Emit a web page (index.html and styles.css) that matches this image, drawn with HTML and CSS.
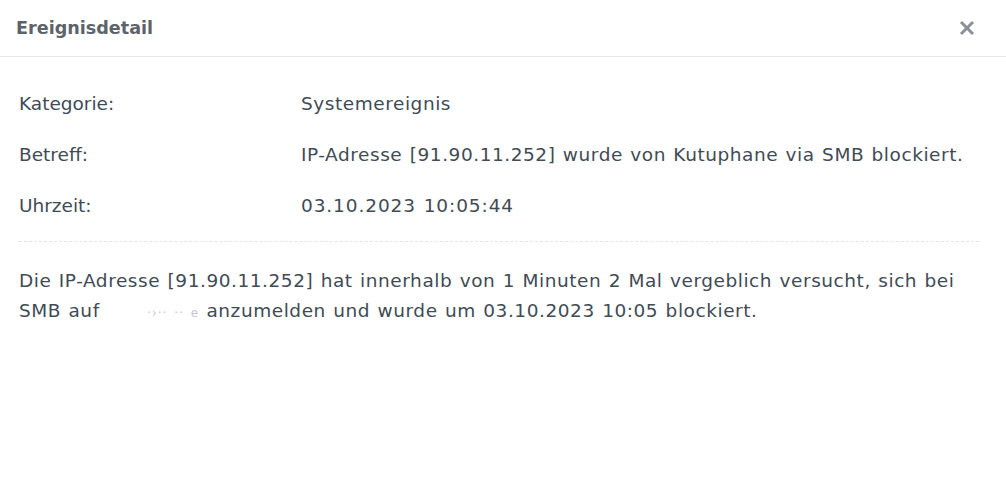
FILE: index.html
```html
<!DOCTYPE html>
<html lang="de">
<head>
<meta charset="utf-8">
<link rel="stylesheet" href="styles.css">
</head>
<body>
<div class="dialog">
  <header class="header">
    <h1 class="title">Ereignisdetail</h1>
    <button class="close" aria-label="Schließen">
      <svg width="16" height="16" viewBox="0 0 16 16"><path d="M2 2 L14 14 M14 2 L2 14" stroke="#8b9096" stroke-width="3" stroke-linecap="butt"/></svg>
    </button>
  </header>
  <main class="body">
    <div class="fields">
      <div class="row"><span class="label">Kategorie:</span><span class="value">Systemereignis</span></div>
      <div class="row"><span class="label">Betreff:</span><span class="value">IP-Adresse [91.90.11.252] wurde von Kutuphane via SMB blockiert.</span></div>
      <div class="row"><span class="label">Uhrzeit:</span><span class="value num">03.10.2023 10:05:44</span></div>
    </div>
    <p class="desc">Die IP-Adresse [91.90.11.252] hat innerhalb von 1 Minuten 2 Mal vergeblich versucht, sich bei SMB auf <span class="redacted">·›·· ·· e</span> anzumelden und wurde um 03.10.2023 10:05 blockiert.</p>
  </main>
</div>
</body>
</html>
```

FILE: styles.css
```css
html, body {
  margin: 0;
  padding: 0;
  background: #ffffff;
}
body {
  font-family: "DejaVu Sans", Verdana, sans-serif;
  color: #414b55;
}
.dialog {
  width: 1006px;
  height: 478px;
  background: #fff;
}
.header {
  height: 57px;
  box-sizing: border-box;
  border-bottom: 1px solid #e6e7e8;
  display: flex;
  align-items: center;
  justify-content: space-between;
  padding: 0 30px 0 16px;
}
.title {
  margin: 0;
  font-size: 17.6px;
  font-weight: bold;
  color: #5c636b;
}
.close {
  border: 0;
  background: none;
  padding: 0;
  width: 18px;
  height: 18px;
  display: flex;
  align-items: center;
  justify-content: center;
}
.body {
  padding: 32px 27px 0 19px;
}
.fields {
  display: flex;
  flex-direction: column;
  gap: 21px;
  padding-bottom: 20px;
  border-bottom: 1px dashed #e3e4e6;
}
.row {
  display: grid;
  grid-template-columns: 282px 1fr;
  line-height: 30px;
  font-size: 18.5px;
}
.value {
  word-spacing: 1px;
  letter-spacing: 0.55px;
}
.value.num {
  letter-spacing: 0.9px;
}
.desc {
  margin: 24px 0 0;
  font-size: 18.5px;
  line-height: 30px;
  word-spacing: 1px;
  letter-spacing: 0.55px;
}
.redacted {
  display: inline-block;
  padding-left: 40px;
  color: #c4c7cb;
  font-size: 12px;
  line-height: 14px;
  letter-spacing: 1px;
  word-spacing: 2px;
  white-space: nowrap;
}
```
